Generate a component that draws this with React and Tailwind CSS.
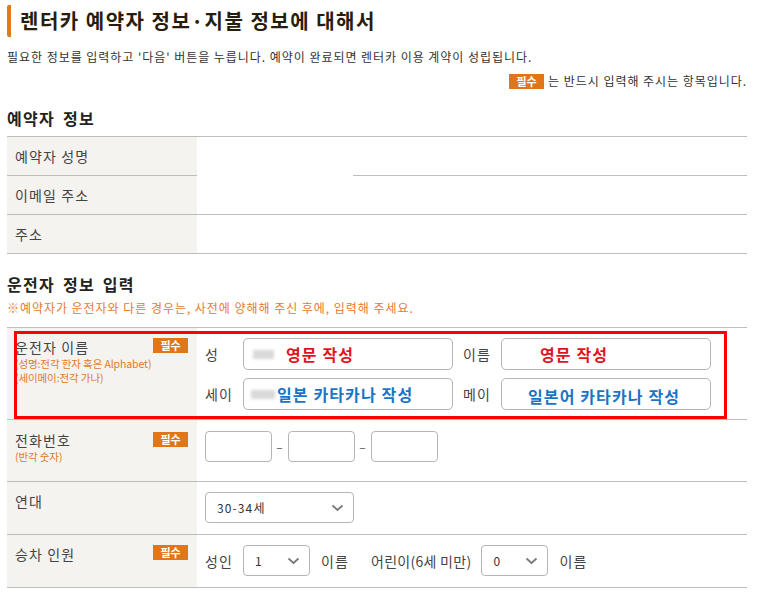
const FONT = { fontFamily: '"Noto Sans CJK KR", "Noto Sans", sans-serif' };

const Badge = () => (
  <span className="flex h-[15px] w-[35px] items-center justify-center bg-[#e0761a] text-[11px] font-bold leading-none tracking-normal text-white">
    필수
  </span>
);

const Chevron = () => (
  <svg width="13" height="8" viewBox="0 0 13 8" className="shrink-0">
    <polyline points="1.5,1.5 6.5,6 11.5,1.5" fill="none" stroke="#777" strokeWidth="1.7" />
  </svg>
);

const Select = ({ value, width }) => (
  <div
    className={`flex h-[31px] items-center justify-between rounded-[4px] border border-[#b5b5b5] bg-white pl-[11px] pr-[9px] text-[12px] text-[#333] ${width}`}
  >
    <span>{value}</span>
    <Chevron />
  </div>
);

const Blob = ({ w }) => (
  <span className={`mr-[12px] h-[9px] ${w} shrink-0 bg-[#c9c9c9] opacity-70 blur-[1.5px]`} />
);

const InfoRow = ({ label, gap }) => (
  <div className="flex h-[39px]">
    <div className="flex w-[190px] items-center border-b border-[#bdbdbd] bg-[#f5f3ef] pl-[8px] text-[14px] text-[#444]">
      {label}
    </div>
    {gap ? (
      <>
        <div className="w-[156px]" />
        <div className="flex-1 border-b border-[#bdbdbd]" />
      </>
    ) : (
      <div className="flex-1 border-b border-[#bdbdbd]" />
    )}
  </div>
);

export default function App() {
  return (
    <div className="h-[594px] w-[761px] bg-white px-[7px] tracking-[0.07em] text-[#333]" style={FONT}>
      {/* title */}
      <div className="pt-[5px]">
        <div className="flex h-[32px] items-center rounded-l-[2px] border-l-4 border-[#e07b1c] pl-[9px]">
          <h1 className="text-[20px] font-bold leading-none tracking-[0.075em] text-[#2a1c0c]">
            렌터카 예약자 정보·지불 정보에 대해서
          </h1>
        </div>
      </div>

      <p className="mt-[10px] h-[20px] whitespace-nowrap text-[12px] leading-[20px] tracking-[0.08em] text-[#333]">
        필요한 정보를 입력하고 '다음' 버튼을 누릅니다. 예약이 완료되면 렌터카 이용 계약이 성립됩니다.
      </p>
      <div className="mt-[4px] flex h-[20px] w-[740px] items-center justify-end gap-[4px] text-[12px] tracking-[0.08em] text-[#333]">
        <Badge />
        <span>는 반드시 입력해 주시는 항목입니다.</span>
      </div>

      {/* booker */}
      <h2 className="mt-[15px] h-[24px] text-[16px] font-bold leading-[24px] tracking-[0.08em] text-[#222] [word-spacing:3px]">
        예약자 정보
      </h2>
      <div className="mt-[6px] w-[740px] border-t border-[#bdbdbd]">
        <InfoRow label="예약자 성명" gap />
        <InfoRow label="이메일 주소" />
        <InfoRow label="주소" />
      </div>

      {/* driver */}
      <h2 className="mt-[18px] h-[24px] text-[16px] font-bold leading-[24px] tracking-[0.08em] text-[#222] [word-spacing:3px]">
        운전자 정보 입력
      </h2>
      <p className="mt-[2px] h-[20px] whitespace-nowrap text-[12px] leading-[20px] tracking-[0.08em] text-[#e8792c]">
        ※예약자가 운전자와 다른 경우는, 사전에 양해해 주신 후에, 입력해 주세요.
      </p>

      <div className="mt-[9px] w-[740px] border-t border-[#bdbdbd]">
        {/* driver name */}
        <div className="relative flex border-b border-[#bdbdbd]">
          <div className="flex w-[190px] justify-between bg-[#f5f3ef] pl-[8px] pr-[9px] pt-[9px]">
            <div className="whitespace-nowrap">
              <div className="text-[14px] leading-[20px] text-[#444]">운전자 이름</div>
              <div className="text-[10.5px] leading-[14px] tracking-[-0.01em] text-[#e07a2a]">(성명:전각 한자 혹은 Alphabet)</div>
              <div className="text-[10.5px] leading-[14px] tracking-[-0.01em] text-[#e07a2a]">(세이메이:전각 가나)</div>
            </div>
            <div className="pt-[1px]">
              <Badge />
            </div>
          </div>
          <div className="flex flex-col gap-[8px] pb-[9px] pl-[8px] pt-[10px] text-[14px] text-[#444]">
            <div className="flex items-center">
              <span className="w-[38px]">성</span>
              <div className="flex h-[32px] w-[210px] items-center rounded-[5px] border border-[#b5b5b5] pl-[9px]">
                <Blob w="w-[21px]" />
                <span className="text-[16px] font-bold text-[#e0141e]">영문 작성</span>
              </div>
              <span className="ml-[10px] w-[38px]">이름</span>
              <div className="flex h-[32px] w-[210px] items-center rounded-[5px] border border-[#b5b5b5] pl-[38px]">
                <span className="text-[16px] font-bold text-[#e0141e]">영문 작성</span>
              </div>
            </div>
            <div className="flex items-center">
              <span className="w-[38px]">세이</span>
              <div className="flex h-[32px] w-[210px] items-center rounded-[5px] border border-[#b5b5b5] pl-[7px]">
                <Blob w="w-[24px]" />
                <span className="-ml-[10px] text-[16px] font-bold text-[#1a74c6]">일본 카타카나 작성</span>
              </div>
              <span className="ml-[10px] w-[38px]">메이</span>
              <div className="flex h-[32px] w-[210px] items-center rounded-[5px] border border-[#b5b5b5] pl-[26px] pt-[4px]">
                <span className="text-[16px] font-bold text-[#1a74c6]">일본어 카타카나 작성</span>
              </div>
            </div>
          </div>
          {/* highlight annotation */}
          <div className="pointer-events-none absolute left-[7px] top-[3px] h-[88px] w-[713px] border-[3px] border-[#ff0000]" />
        </div>

        {/* phone */}
        <div className="flex h-[62px] border-b border-[#bdbdbd]">
          <div className="flex w-[190px] justify-between bg-[#f5f3ef] pl-[8px] pr-[9px] pt-[10px]">
            <div>
              <div className="text-[14px] leading-[20px] text-[#444]">전화번호</div>
              <div className="text-[10.5px] leading-[14px] tracking-[-0.01em] text-[#e07a2a]">(반각 숫자)</div>
            </div>
            <div className="pt-[2px]">
              <Badge />
            </div>
          </div>
          <div className="flex items-start pl-[8px] pt-[11px] text-[12px] text-[#555]">
            <div className="h-[31px] w-[67px] rounded-[4px] border border-[#b5b5b5]" />
            <span className="flex h-[31px] w-[16px] items-center justify-center">–</span>
            <div className="h-[31px] w-[67px] rounded-[4px] border border-[#b5b5b5]" />
            <span className="flex h-[31px] w-[16px] items-center justify-center">–</span>
            <div className="h-[31px] w-[67px] rounded-[4px] border border-[#b5b5b5]" />
          </div>
        </div>

        {/* age */}
        <div className="flex h-[53px] border-b border-[#bdbdbd]">
          <div className="w-[190px] bg-[#f5f3ef] pl-[8px] pt-[9px] text-[14px] leading-[20px] text-[#444]">연대</div>
          <div className="pl-[8px] pt-[10px]">
            <Select value="30-34세" width="w-[149px]" />
          </div>
        </div>

        {/* passengers */}
        <div className="flex h-[53px] border-b border-[#bdbdbd]">
          <div className="flex w-[190px] justify-between bg-[#f5f3ef] pl-[8px] pr-[9px] pt-[9px]">
            <div className="text-[14px] leading-[20px] text-[#444]">승차 인원</div>
            <div className="pt-[1px]">
              <Badge />
            </div>
          </div>
          <div className="flex items-start pl-[8px] pt-[10px] text-[14px] text-[#444]">
            <span className="flex h-[31px] w-[38px] items-center pt-[1px]">성인</span>
            <Select value="1" width="w-[67px]" />
            <span className="flex h-[31px] items-center pl-[11px] pt-[1px]">이름</span>
            <span className="flex h-[31px] items-center pl-[22px] pt-[1px] tracking-[0.02em]">어린이(6세 미만)</span>
            <div className="ml-[10px]">
              <Select value="0" width="w-[67px]" />
            </div>
            <span className="flex h-[31px] items-center pl-[11px] pt-[1px]">이름</span>
          </div>
        </div>
      </div>
    </div>
  );
}
